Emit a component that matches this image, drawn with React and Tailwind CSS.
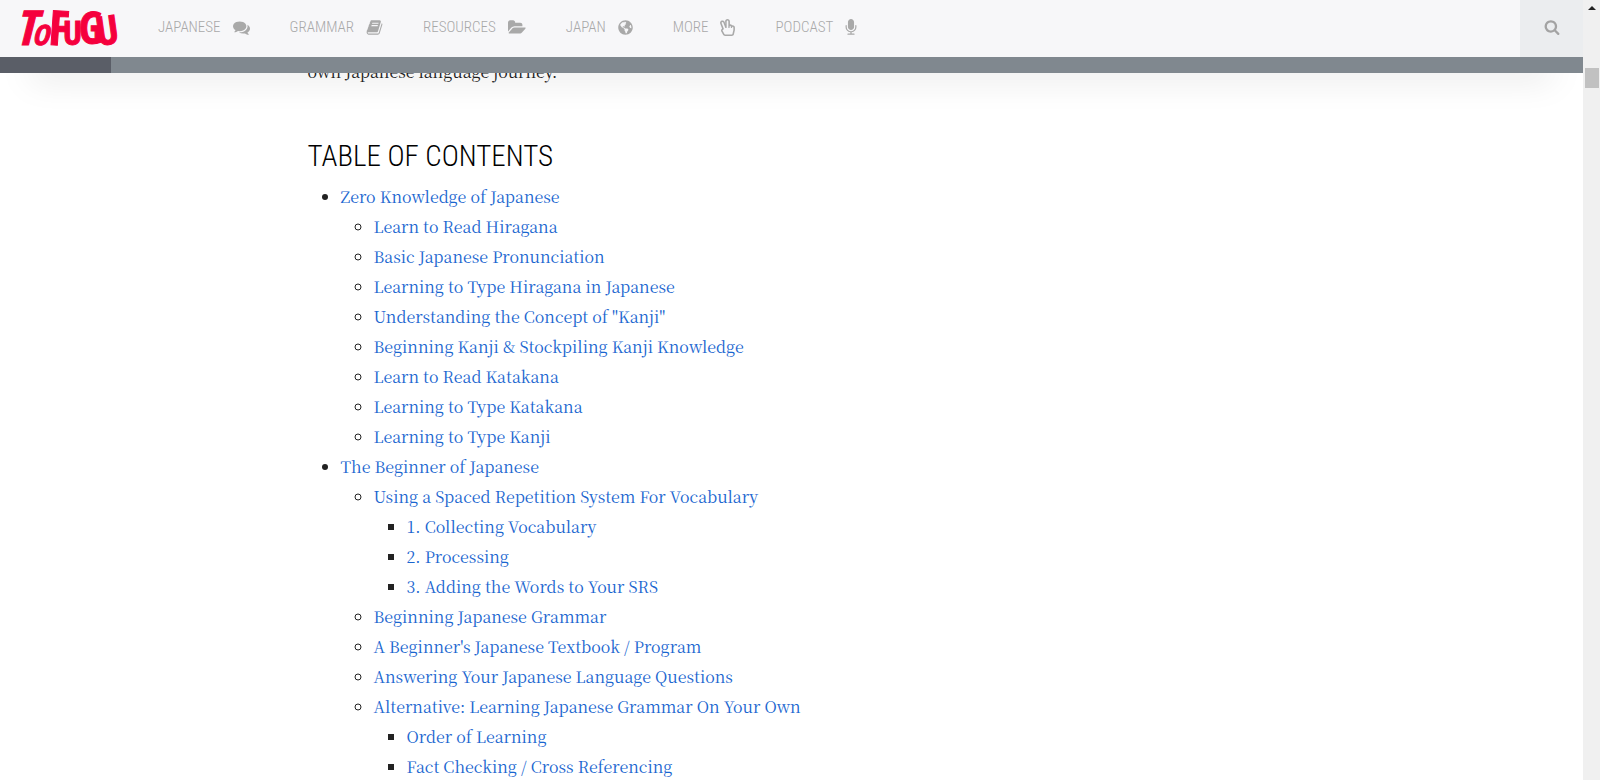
import React from "react";
import { FaGlobeAmericas, FaRegHandPeace } from "react-icons/fa";

const NARROW = "font-['Roboto_Condensed','Roboto',sans-serif]";
const SERIF = "font-['Noto_Serif_CJK_JP','Noto_Serif','Liberation_Serif',serif]";

const ICON_PATHS = {
  comments: {
    box: "0 0 1792 1792",
    d: "M1408 768q0 139-94 257t-256.500 186.500-353.500 68.500q-86 0-176-16-124 88-278 128-36 9-86 16h-3q-11 0-20.500-8t-11.500-21q-1-3-1-6.500t.5-6.500 2-6l2.500-5 3.500-5.500 4-5 4.500-5 4-4.500q5-6 23-25t26-29.500 22.500-29 25-38.500 20.500-44q-124-72-195-177t-71-224q0-139 94-257t256.500-186.500 353.500-68.500 353.500 68.500 256.500 186.500 94 257zm384 256q0 120-71 224.500t-195 176.500q10 24 20.500 44t25 38.500 22.500 29 26 29.500 23 25q1 1 4 4.500t4.500 5 4 5 3.500 5.500l2.500 5 2 6 .5 6.500-1 6.500q-3 14-13 22t-22 7q-50-7-86-16-154-40-278-128-90 16-176 16-271 0-472-132 58 4 88 4 161 0 309-45t264-129q125-92 192-212t67-254q0-77-23-152 129 71 204 178t75 230z",
  },
  book: {
    box: "0 0 1792 1792",
    d: "M1703 478q40 57 18 129l-275 906q-19 64-76.500 107.500t-122.500 43.500h-923q-77 0-148.500-53.500t-99.500-131.500q-24-67-2-127 0-4 3-27t4-37q1-8-3-21.500t-3-19.500q2-11 8-21t16.500-23.500 16.500-23.500q23-38 45-91.500t30-91.500q3-10 .5-30t-.5-28q3-11 17-28t17-23q21-36 42-92t25-90q1-9-2.500-32t.5-28q4-13 22-30.500t22-22.500q19-26 42.500-84.500t27.500-96.500q1-8-3-25.500t-2-26.500q2-8 9-18t18-23 17-21q8-12 16.500-30.500t15-35 16-36 19.500-32 26.500-23.500 36-11.500 47.500 5.500l-1 3q38-9 51-9h761q74 0 114 56t18 130l-274 906q-36 119-71.500 153.500t-128.500 34.500h-869q-27 0-38 15-11 16-1 43 24 70 144 70h923q29 0 56-15.500t35-41.500l300-987q7-22 5-57 38 15 59 43zm-1064 2q-4 13 2 22.500t20 9.500h608q13 0 25.500-9.500t16.500-22.500l21-64q4-13-2-22.500t-20-9.500h-608q-13 0-25.500 9.500t-16.500 22.500zm-83 256q-4 13 2 22.500t20 9.500h608q13 0 25.500-9.500t16.500-22.500l21-64q4-13-2-22.500t-20-9.500h-608q-13 0-25.500 9.500t-16.500 22.500z",
  },
  folder: {
    box: "0 0 1920 1792",
    d: "M1879 952q0 31-31 66l-336 396q-43 51-120.500 86.500t-143.500 35.500h-1088q-34 0-60.500-13t-26.500-43q0-31 31-66l336-396q43-51 120.500-86.500t143.500-35.500h1088q34 0 60.500 13t26.500 43zm-343-344v160h-832q-94 0-197 47.500t-164 119.500l-337 396-5 6q0-4-.5-12.500t-.5-12.500v-960q0-92 66-158t158-66h320q92 0 158 66t66 158v32h544q92 0 158 66t66 158z",
  },
  microphone: {
    box: "288 0 1216 1792",
    d: "M1472 704v128q0 221-147.500 384.500t-364.500 187.500v132h256q26 0 45 19t19 45-19 45-45 19h-640q-26 0-45-19t-19-45 19-45 45-19h256v-132q-217-24-364.500-187.500t-147.500-384.500v-128q0-26 19-45t45-19 45 19 19 45v128q0 185 131.500 316.500t316.500 131.500 316.500-131.500 131.500-316.500v-128q0-26 19-45t45-19 45 19 19 45zm-256-384v512q0 132-94 226t-226 94-226-94-94-226v-512q0-132 94-226t226-94 226 94 94 226z",
  },
  search: {
    box: "0 0 1792 1792",
    d: "M1216 832q0-185-131.500-316.500t-316.500-131.500-316.500 131.500-131.500 316.500 131.500 316.500 316.500 131.500 316.500-131.500 131.500-316.500zm512 832q0 52-38 90t-90 38q-54 0-90-38l-343-342q-179 124-399 124-143 0-273.500-55.500t-225-150-150-225-55.500-273.500 55.500-273.500 150-225 225-150 273.500-55.500 273.500 55.500 225 150 150 225 55.500 273.500q0 220-124 399l343 343q37 37 37 90z",
  },
};

function Icon({ name, className }) {
  const icon = ICON_PATHS[name];
  return (
    <svg viewBox={icon.box} className={className} fill="currentColor" aria-hidden="true">
      <path d={icon.d} />
    </svg>
  );
}

const NAV = [
  { label: "Japanese", icon: <Icon name="comments" className="h-[17px] w-[17px]" /> },
  { label: "Grammar", icon: <Icon name="book" className="h-[17px] w-[17px]" /> },
  { label: "Resources", icon: <Icon name="folder" className="h-[17px] w-[18px]" /> },
  { label: "Japan", icon: <FaGlobeAmericas className="h-[15px] w-[15px]" /> },
  { label: "More", icon: <FaRegHandPeace className="h-[17px] w-[15px]" /> },
  { label: "Podcast", icon: <Icon name="microphone" className="h-[17px] w-[12px]" /> },
];

const TOC = [
  {
    title: "Zero Knowledge of Japanese",
    items: [
      { title: "Learn to Read Hiragana" },
      { title: "Basic Japanese Pronunciation" },
      { title: "Learning to Type Hiragana in Japanese" },
      { title: 'Understanding the Concept of "Kanji"' },
      { title: "Beginning Kanji & Stockpiling Kanji Knowledge" },
      { title: "Learn to Read Katakana" },
      { title: "Learning to Type Katakana" },
      { title: "Learning to Type Kanji" },
    ],
  },
  {
    title: "The Beginner of Japanese",
    items: [
      {
        title: "Using a Spaced Repetition System For Vocabulary",
        items: [
          { title: "1. Collecting Vocabulary" },
          { title: "2. Processing" },
          { title: "3. Adding the Words to Your SRS" },
        ],
      },
      { title: "Beginning Japanese Grammar" },
      { title: "A Beginner's Japanese Textbook / Program" },
      { title: "Answering Your Japanese Language Questions" },
      {
        title: "Alternative: Learning Japanese Grammar On Your Own",
        items: [{ title: "Order of Learning" }, { title: "Fact Checking / Cross Referencing" }],
      },
    ],
  },
];

const BULLETS = ["list-disc", "list-[circle]", "list-[square]"];

function Logo() {
  return (
    <svg
      viewBox="0 0 100 56"
      className="h-14 w-[100px] overflow-visible font-['Open_Sans_Condensed','Open_Sans',sans-serif] font-bold"
      fill="#f5003d"
      stroke="#f5003d"
      strokeWidth="1"
      role="img"
      aria-label="Tofugu"
    >
      <text x="-5" y="45" fontSize="48" fontStyle="italic">T</text>
      <text x="12" y="45" fontSize="28" fontStyle="italic">O</text>
      <text x="28" y="45" fontSize="48" transform="rotate(4 36 45)">F</text>
      <text x="43" y="45" fontSize="34">U</text>
      <text x="59" y="44" fontSize="44">G</text>
      <text x="78" y="45" fontSize="40" transform="rotate(-8 86 45)">U</text>
    </svg>
  );
}

function Header() {
  return (
    <header className="relative z-10 shadow-[0_34px_34px_-30px_rgba(0,0,0,0.15)]">
      <div className="flex h-[57px] bg-[#f7f7f9]">
        <a href="#" className="ml-5 shrink-0">
          <Logo />
        </a>
        <nav className={`${NARROW} ml-[38px] flex h-[54px] items-center gap-10 text-[15px] font-light uppercase text-[#a9a9a9]`}>
          {NAV.map(({ label, icon }) => (
            <a key={label} href="#" className="flex items-center gap-3">
              {label}
              {icon}
            </a>
          ))}
        </nav>
        <button aria-label="Search" className="ml-auto flex w-[63px] items-center justify-center bg-[#ebedef] pb-[3px] text-[#a3a3a3]">
          <Icon name="search" className="h-4 w-4" />
        </button>
      </div>
      {/* reading progress */}
      <div className="h-4 bg-[#80888f]">
        <div className="h-full w-[7%] bg-[#5a5e67]" />
      </div>
    </header>
  );
}

function TocList({ items, level = 0 }) {
  return (
    <ul className={`${BULLETS[level]} pl-[33px]`}>
      {items.map((item) => (
        <li key={item.title}>
          <a href="#" className="text-[#1a66d0] hover:underline">
            {item.title}
          </a>
          {item.items && <TocList items={item.items} level={level + 1} />}
        </li>
      ))}
    </ul>
  );
}

function Scrollbar() {
  return (
    <div className="relative z-20 flex w-[17px] shrink-0 flex-col items-center bg-[#f0f0f0]" aria-hidden="true">
      <svg viewBox="0 0 8 4" className="mt-[6px] h-1 w-2" fill="#222222">
        <path d="M4 0 8 4H0z" />
      </svg>
      <div className="mt-[58px] h-5 w-[14px] bg-[#c1c1c1]" />
    </div>
  );
}

export default function App() {
  return (
    <div className="flex h-screen overflow-hidden bg-white">
      <div className="flex min-w-0 flex-1 flex-col">
        <Header />
        <main className="min-h-0 flex-1">
          <article className={`${SERIF} mx-auto -mt-4 max-w-[968px] text-base leading-[30px] text-[#222222]`}>
            <p>own Japanese language journey.</p>
            <h2 className={`${NARROW} mb-2 mt-[51px] text-[29px] font-light uppercase leading-9 text-black`}>
              Table of Contents
            </h2>
            <TocList items={TOC} />
          </article>
        </main>
      </div>
      <Scrollbar />
    </div>
  );
}
